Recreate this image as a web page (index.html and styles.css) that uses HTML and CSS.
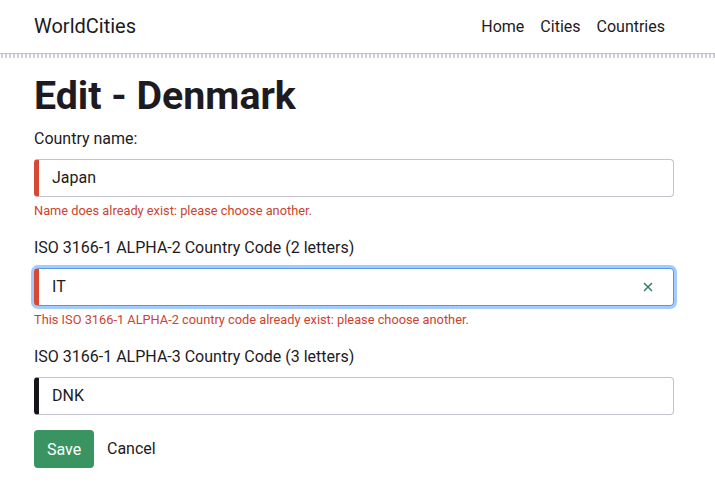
FILE: index.html
```html
<!DOCTYPE html>
<html lang="en">
<head>
<meta charset="utf-8">
<title>Edit - Denmark</title>
<link rel="stylesheet" href="styles.css">
</head>
<body>
<header class="navbar">
  <a class="brand" href="#">WorldCities</a>
  <nav class="nav">
    <a class="nav-link" href="#">Home</a>
    <a class="nav-link" href="#">Cities</a>
    <a class="nav-link" href="#">Countries</a>
  </nav>
</header>
<div class="nav-shadow"></div>
<main class="container">
  <h1 class="title">Edit - Denmark</h1>
  <form class="form">
    <div class="group">
      <label class="label">Country name:</label>
      <div class="field invalid"><span class="value">Japan</span></div>
      <div class="error">Name does already exist: please choose another.</div>
    </div>
    <div class="group">
      <label class="label">ISO 3166-1 ALPHA-2 Country Code (2 letters)</label>
      <div class="field invalid focused">
        <span class="value">IT</span>
        <svg class="clear" width="10" height="10" viewBox="0 0 10 10"><path d="M1 1 L9 9 M9 1 L1 9" stroke="#2c7a57" stroke-width="1.4" fill="none"/></svg>
      </div>
      <div class="error">This ISO 3166-1 ALPHA-2 country code already exist: please choose another.</div>
    </div>
    <div class="group last">
      <label class="label">ISO 3166-1 ALPHA-3 Country Code (3 letters)</label>
      <div class="field valid"><span class="value">DNK</span></div>
    </div>
    <div class="actions">
      <button class="btn-save" type="button">Save</button>
      <a class="cancel" href="#">Cancel</a>
    </div>
  </form>
</main>
</body>
</html>
```
FILE: styles.css
```css
* { box-sizing: border-box; }
html, body { margin: 0; padding: 0; background: #fff; }
body {
  font-family: Roboto, "Liberation Sans", sans-serif;
  color: #1d1a22;
  font-size: 16px;
  line-height: 1.5;
}
a { color: inherit; text-decoration: none; }

.navbar {
  height: 54px;
  display: flex;
  align-items: center;
  justify-content: space-between;
  padding: 0 42px 0 34px;
  border-bottom: 1px solid #bdbcc8;
}
.brand { font-size: 20px; line-height: 1; padding-bottom: 2px; }
.nav { display: flex; }
.nav-link { padding: 0 8px; font-size: 16px; }

.nav-shadow {
  height: 4px;
  background-image: radial-gradient(circle, #cfced8 0.7px, transparent 0.9px);
  background-size: 4px 2px;
}

.container { padding: 14px 41px 0 34px; }
.title {
  margin: 0 0 7px;
  font-size: 39.3px;
  line-height: 48px;
  font-weight: 700;
}
.group { margin-bottom: 16px; }
.group.last { margin-bottom: 15px; }
.label { display: block; margin-bottom: 8px; }
.field {
  height: 38px;
  display: flex;
  align-items: center;
  justify-content: space-between;
  border: 1px solid #c3c2cd;
  border-radius: 4px;
  padding: 0 20px 0 13px;
}
.field.invalid { border-left: 5px solid #d44a35; }
.field.valid { border-left: 5px solid #16131b; }
.field.focused {
  border-color: #5a97e6;
  border-left-color: #d44a35;
  box-shadow: 0 0 0 3px #a3cbfb;
}
.clear { display: block; }
.error {
  margin-top: 5px;
  font-size: 12.8px;
  line-height: 18px;
  color: #cc4330;
}
.actions { display: flex; align-items: center; gap: 13px; }
.btn-save {
  height: 38px;
  width: 60px;
  border: none;
  border-radius: 4px;
  background: #3a9461;
  color: #fff;
  font-family: inherit;
  font-size: 16px;
  padding: 0;
}
.cancel { font-size: 16px; }
```
